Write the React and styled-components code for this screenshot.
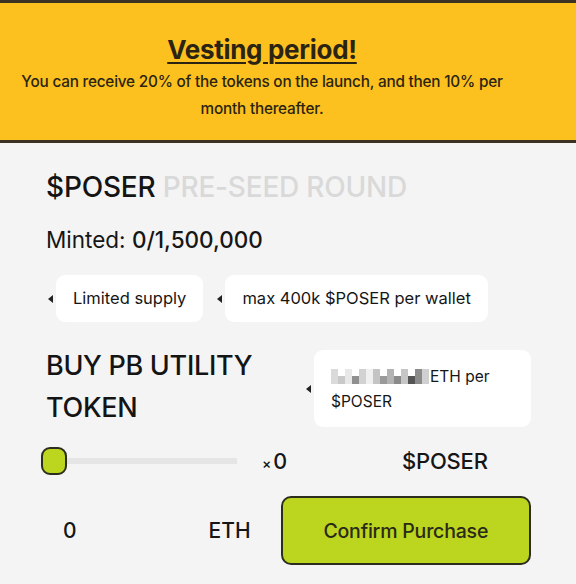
import styled, { createGlobalStyle } from 'styled-components';

const GlobalStyle = createGlobalStyle`
  html, body {
    margin: 0;
    padding: 0;
    background: #f4f4f4;
  }
  body {
    font-family: Inter, "Noto Sans", sans-serif;
    color: #161616;
  }
`;

const Page = styled.div`
  width: 576px;
  min-height: 584px;
  background: #f4f4f4;
`;

const Banner = styled.section`
  background: #fdc11f;
  border-top: 3px solid #3b3224;
  border-bottom: 3px solid #3b3224;
  padding: 31px 52px 18px 0;
  text-align: center;
  color: #2b2412;
`;

const BannerTitle = styled.h2`
  margin: 0;
  font-size: 26px;
  font-weight: 700;
  line-height: 32px;
  text-decoration: underline;
  text-decoration-thickness: 2px;
  text-underline-offset: 3px;
  letter-spacing: -0.3px;
`;

const BannerText = styled.p`
  margin: 2px 0 0;
  font-size: 15.3px;
  font-weight: 500;
  line-height: 27px;
  letter-spacing: -0.2px;
`;

const Body = styled.main`
  padding: 26px 45px 0 46px;
  display: flex;
  flex-direction: column;
`;

const Heading = styled.h1`
  margin: 0;
  font-size: 28px;
  font-weight: 500;
  line-height: 36px;
  letter-spacing: -0.2px;
  color: #141414;
`;

const Muted = styled.span`
  color: #d9d9d9;
`;

const Minted = styled.div`
  margin-top: 20px;
  font-size: 22.5px;
  font-weight: 400;
  line-height: 30px;

  b {
    font-weight: 500;
  }
`;

const ChipRow = styled.div`
  margin-top: 20px;
  padding-left: 10px;
  display: flex;
  gap: 22px;
`;

const Chip = styled.div`
  position: relative;
  background: #fff;
  border-radius: 9px;
  padding: ${p => (p.$tall ? '14px 16px 13px 17px' : '12px 17px')};
  font-size: ${p => (p.$tall ? '15.5px' : '16.5px')};
  line-height: ${p => (p.$tall ? '25px' : '23px')};
  font-weight: 400;
  color: #161616;
  width: ${p => p.$width || 'auto'};
  box-sizing: border-box;

  &::before {
    content: '';
    position: absolute;
    left: -8px;
    top: 50%;
    margin-top: -4px;
    border-style: solid;
    border-width: 4px 5px 4px 0;
    border-color: transparent #222 transparent transparent;
  }
`;

const BuyRow = styled.div`
  margin-top: 28px;
  display: flex;
  justify-content: space-between;
  align-items: flex-start;
`;

const BuyTitle = styled.h2`
  margin: -5px 0 0;
  font-size: 27px;
  font-weight: 500;
  line-height: 42px;
  letter-spacing: -0.3px;
  color: #141414;
  width: 240px;
`;

const Mosaic = styled.span`
  display: inline-flex;
  align-items: flex-end;
  vertical-align: -2px;
  margin-right: 1px;
`;

const Px = styled.span`
  width: 7px;
  height: ${p => (p.$h ? '8px' : '15px')};
  display: inline-block;
  background: ${p => p.$c};
`;

const SliderRow = styled.div`
  margin-top: 18px;
  margin-left: -5px;
  display: grid;
  grid-template-columns: 221px 140px auto;
  align-items: center;
`;

const Track = styled.div`
  position: relative;
  height: 28px;
  display: flex;
  align-items: center;

  &::before {
    content: '';
    height: 6px;
    width: 171px;
    margin-left: 25px;
    background: #e5e5e5;
  }
`;

const Thumb = styled.div`
  position: absolute;
  left: 0;
  top: 0;
  width: 26px;
  height: 28px;
  box-sizing: border-box;
  border: 2px solid #2d2d1d;
  border-radius: 9px;
  background: #bcd51f;
`;

const Multiplier = styled.span`
  font-size: 21.5px;
  font-weight: 500;

  small {
    font-size: 14px;
    margin-right: 2px;
  }
`;

const Unit = styled.span`
  font-size: 22px;
  font-weight: 500;
  letter-spacing: -0.2px;
`;

const ConfirmRow = styled.div`
  margin-top: 21px;
  display: flex;
  align-items: center;
`;

const Amount = styled.div`
  width: 235px;
  padding: 0 30px 0 17px;
  box-sizing: border-box;
  display: flex;
  justify-content: space-between;
  font-size: 21px;
  font-weight: 500;
`;

const ConfirmButton = styled.button`
  width: 251px;
  height: 69px;
  background: #bcd51f;
  border: 2px solid #2d2d1d;
  border-radius: 10px;
  font-family: inherit;
  font-size: 19.5px;
  font-weight: 500;
  color: #2a2a18;
  letter-spacing: -0.2px;
  cursor: pointer;
`;

const mosaic = [
  ['#dadada', 0], ['#c9c9c9', 1], ['#e8e8e8', 0], ['#8f8f8f', 1], ['#d2d2d2', 0], ['#f0f0f0', 0],
  ['#c4c4c4', 0], ['#9a9a9a', 1], ['#b3b3b3', 0], ['#8a8a8a', 1], ['#c6c6c6', 0], ['#555', 1], ['#8b8b8b', 0], ['#d0d0d0', 0],
];

export default function App() {
  return (
    <Page>
      <GlobalStyle />
      <Banner>
        <BannerTitle>Vesting period!</BannerTitle>
        <BannerText>
          You can receive 20% of the tokens on the launch, and then 10% per
          <br />
          month thereafter.
        </BannerText>
      </Banner>
      <Body>
        <Heading>
          $POSER <Muted>PRE-SEED ROUND</Muted>
        </Heading>
        <Minted>
          Minted: <b>0/1,500,000</b>
        </Minted>
        <ChipRow>
          <Chip>Limited supply</Chip>
          <Chip>max 400k $POSER per wallet</Chip>
        </ChipRow>
        <BuyRow>
          <BuyTitle>BUY PB UTILITY TOKEN</BuyTitle>
          <Chip $tall $width="217px">
            <Mosaic>
              {mosaic.map(([c, h], i) => (
                <Px key={i} $c={c} $h={h} />
              ))}
            </Mosaic>
            ETH per
            <br />
            $POSER
          </Chip>
        </BuyRow>
        <SliderRow>
          <Track>
            <Thumb />
          </Track>
          <Multiplier>
            <small>×</small>0
          </Multiplier>
          <Unit>$POSER</Unit>
        </SliderRow>
        <ConfirmRow>
          <Amount>
            <span>0</span>
            <span>ETH</span>
          </Amount>
          <ConfirmButton>Confirm Purchase</ConfirmButton>
        </ConfirmRow>
      </Body>
    </Page>
  );
}
